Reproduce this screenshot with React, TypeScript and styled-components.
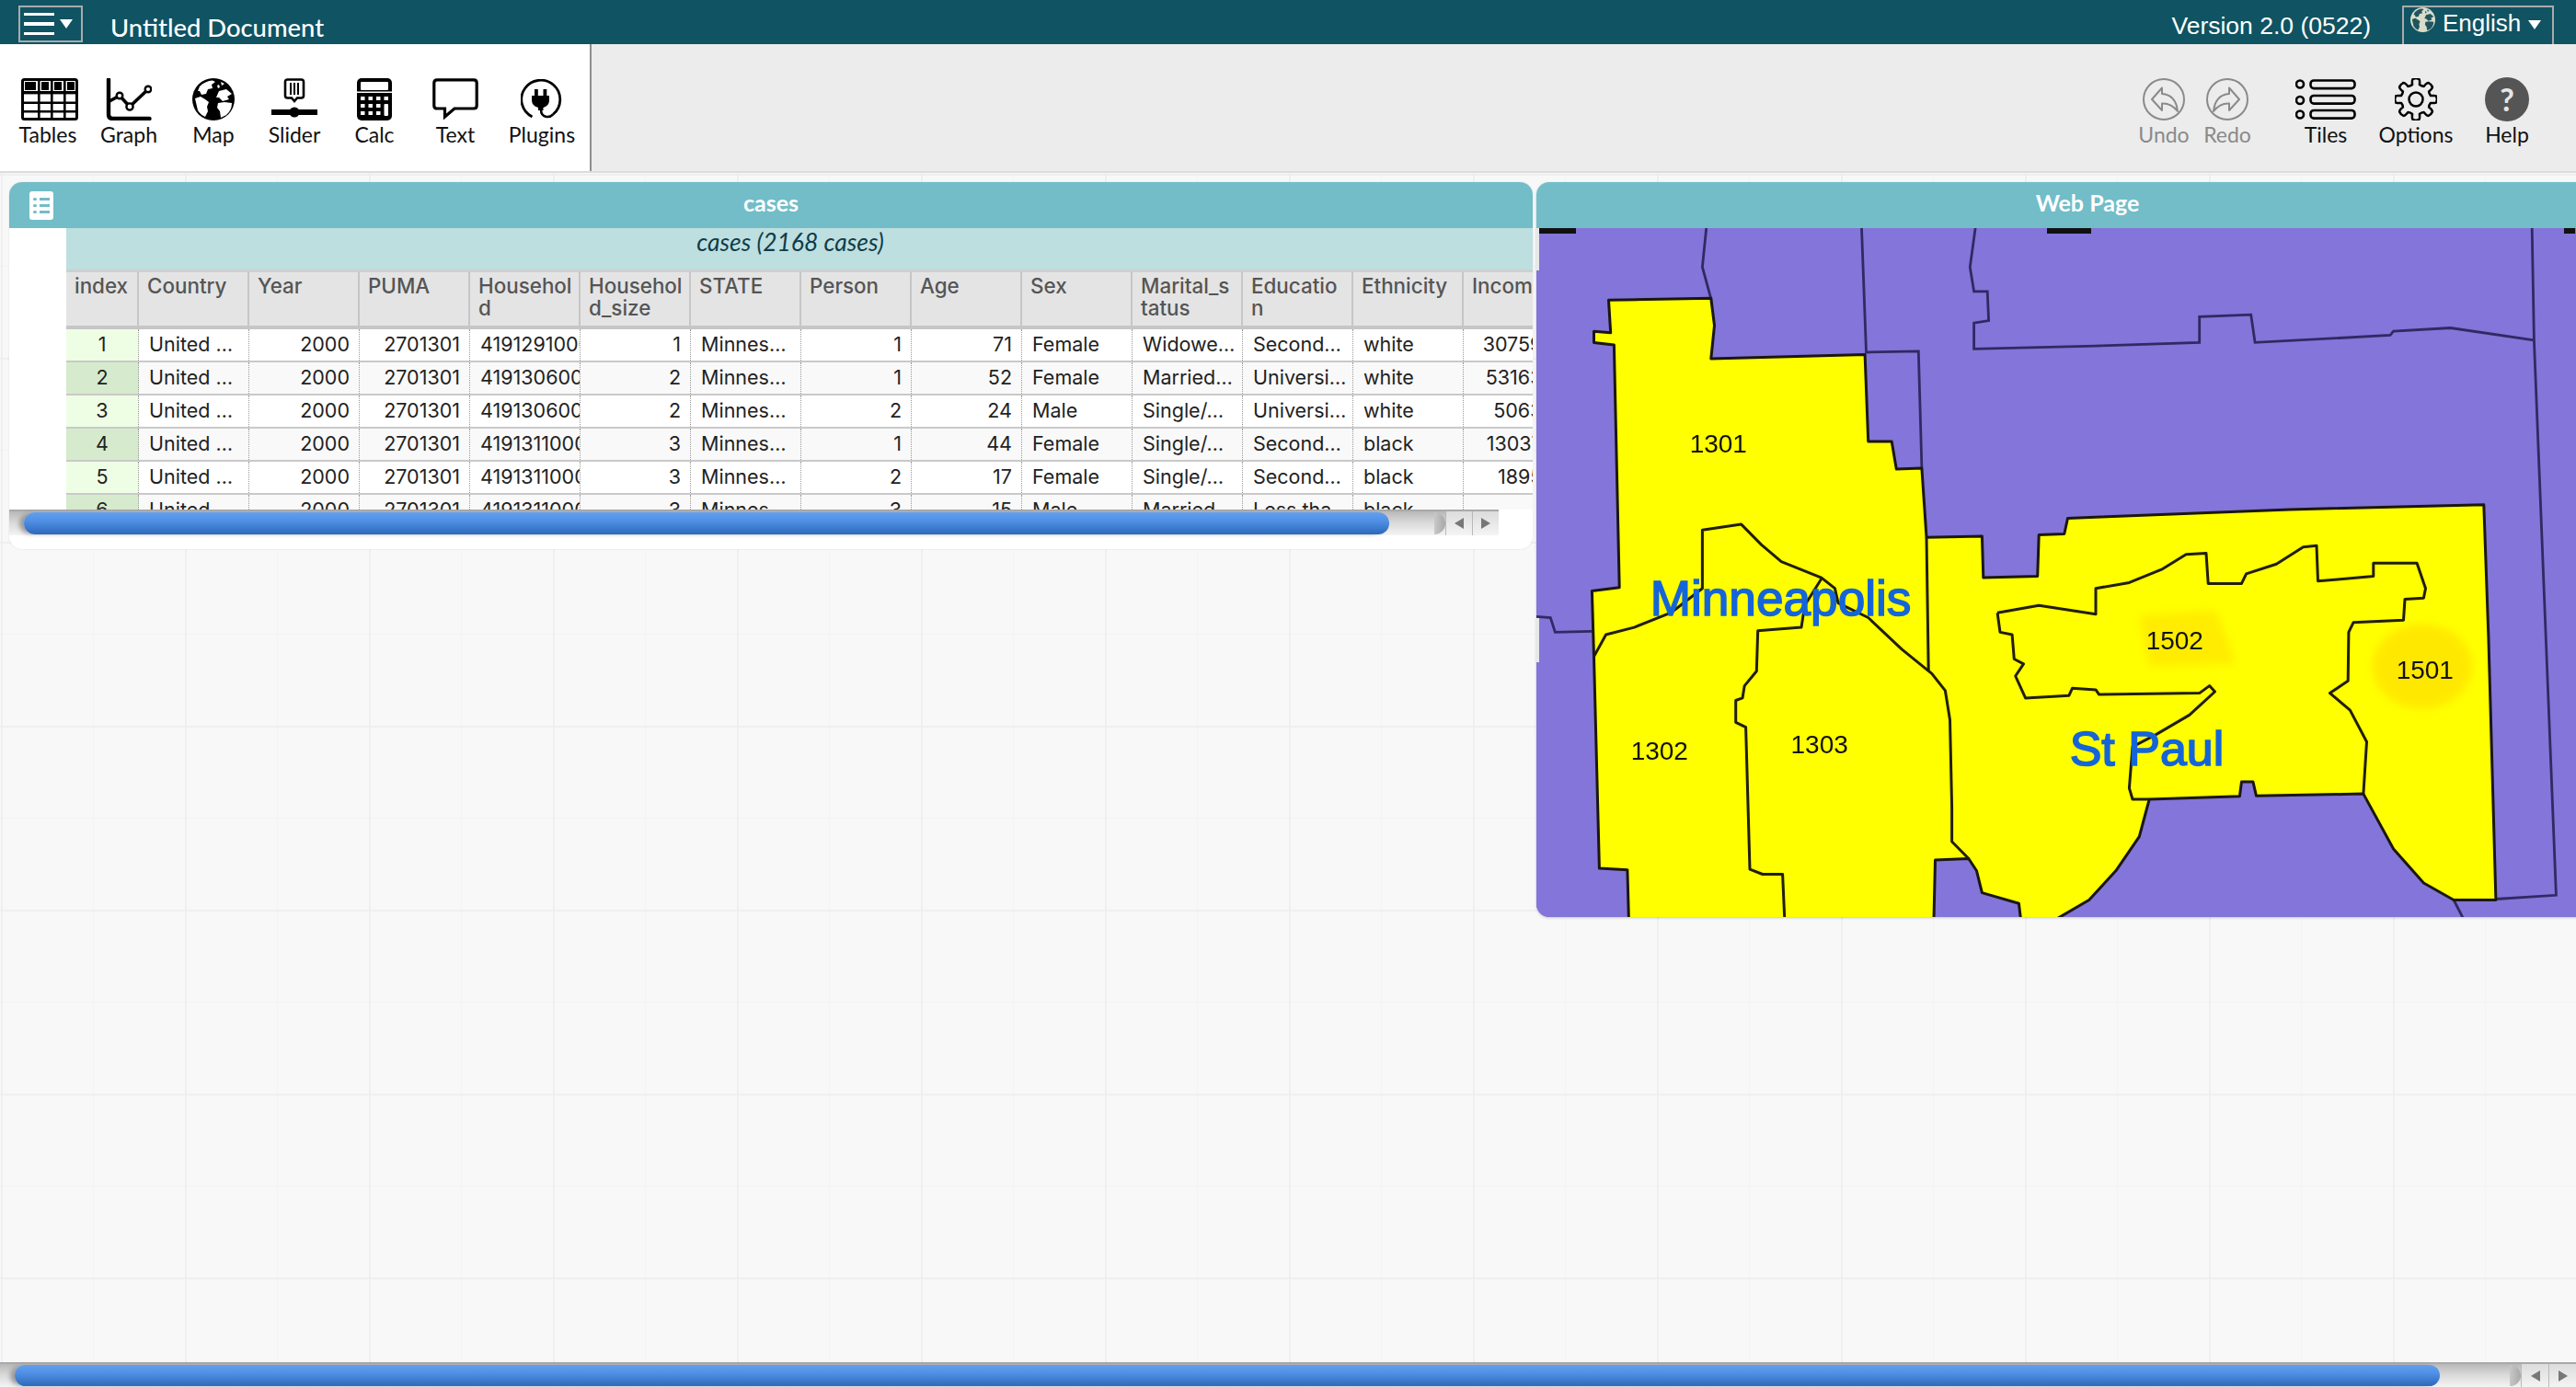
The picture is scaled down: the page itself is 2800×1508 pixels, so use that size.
import React from "react";
import styled, { createGlobalStyle } from "styled-components";

const Global = createGlobalStyle`
  html, body { margin: 0; padding: 0; background: #f8f8f8; overflow: hidden; }
  * { box-sizing: border-box; }
`;

const Page = styled.div`
  width: 2800px; height: 1508px; display: flex; flex-direction: column; overflow: hidden;
  font-family: Lato, "Open Sans", sans-serif;
`;

/* ---------- top bar ---------- */
const TopBar = styled.header`
  height: 48px; flex: none; background: #105362; color: #fff; display: flex; align-items: flex-start;
  padding: 6px 24px 0 20px;
`;
const MenuButton = styled.div`
  width: 70px; height: 40px; border: 2px solid #aaa; display: flex; align-items: center; padding-left: 4px; gap: 6px;
`;
const MenuBars = styled.div`
  width: 33px; display: flex; flex-direction: column; gap: 7px;
  span { display: block; height: 3.5px; background: #fff; }
`;
const Caret = styled.span<{ $size: number }>`
  display: block; width: 0; height: 0;
  border-left: ${p => p.$size}px solid transparent; border-right: ${p => p.$size}px solid transparent;
  border-top: ${p => p.$size * 1.5}px solid #fff;
`;
const DocTitle = styled.div`
  margin-left: 30px; font-size: 27.4px; line-height: 50px; margin-top: -1px; font-weight: 500;
`;
const Version = styled.div`
  margin-left: auto; font-family: "Liberation Sans", Arial, sans-serif; font-size: 26.5px; line-height: 44px;
`;
const LangBox = styled.div`
  margin-left: 34px; width: 165px; height: 42px; border: 2px solid #aaa; border-bottom: 0; display: flex; align-items: flex-start;
  padding: 0 0 0 7px; font-family: "Liberation Sans", Arial, sans-serif; font-size: 26px; line-height: 36px;
  svg { flex: none; }
`;
const LangName = styled.span` margin: -1px 8px 0 8px; `;
const LangCaret = styled.div` margin-top: 14px; `;

/* ---------- toolbar ---------- */
const Toolbar = styled.div`
  height: 140px; flex: none; display: flex; background: #ececec; border-bottom: 2px solid #dcdcdc;
`;
const LeftTools = styled.div`
  width: 643px; background: #fff; border-right: 2px solid #8e8e8e; display: flex; padding-left: 12px;
`;
const RightTools = styled.div`
  margin-left: auto; display: flex; padding-right: 24px;
`;
const ToolButton = styled.div<{ $w: number; $muted?: boolean; $after?: number }>`
  width: ${p => p.$w}px; margin-right: ${p => p.$after ?? 0}px; display: flex; flex-direction: column; align-items: center; padding-top: 35px;
  color: ${p => (p.$muted ? "#8a8a8a" : "#111")};
`;
const ToolIcon = styled.div<{ $dx?: number }>`
  height: 49px; display: flex; align-items: center; justify-content: center; padding-left: ${p => p.$dx ?? 0}px;
`;
const ToolLabel = styled.div`
  font-size: 23px; line-height: 28px; white-space: nowrap;
`;
const HelpDisc = styled.div`
  width: 48px; height: 48px; border-radius: 50%; background: #555; color: #e6e6e6; font-size: 34px; font-weight: 700;
  display: flex; align-items: center; justify-content: center;
`;

/* ---------- canvas ---------- */
const Canvas = styled.main`
  flex: 1; min-height: 0; overflow: hidden; display: flex; align-items: flex-start; gap: 4px; padding: 10px 0 0 10px;
  background-color: #f8f8f8;
  background-image:
    linear-gradient(to right, #efefef 2px, transparent 2px),
    linear-gradient(to bottom, #efefef 2px, transparent 2px),
    linear-gradient(to right, #f3f3f3 1px, transparent 1px),
    linear-gradient(to bottom, #f3f3f3 1px, transparent 1px);
  background-size: 200px 200px, 200px 200px, 100px 100px, 100px 100px;
  background-position: 1px 0, 0 1px, 1px 0, 0 1px;
`;
const CasePanel = styled.section`
  width: 1656px; height: 399px; flex: none; background: #fff; border-radius: 14px; overflow: hidden;
  box-shadow: 0 0 2px rgba(0,0,0,.12);
`;
const PanelTitle = styled.div`
  height: 50px; background: #72bdc8; color: #fff; font-size: 25px; font-weight: 700; display: flex; align-items: center; justify-content: center;
  position: relative; padding-bottom: 6px;
`;
const PanelBadge = styled.div`
  position: absolute; left: 22px; top: 10px; width: 26px; height: 31px; background: #fff; border-radius: 3px;
  display: flex; flex-direction: column; justify-content: center; gap: 4px; padding: 0 4px;
`;
const BadgeRow = styled.div`
  display: flex; align-items: center; gap: 3px; height: 3px;
  &::before { content: ""; width: 3.5px; height: 3.5px; border-radius: 50%; background: #72bdc8; }
  &::after { content: ""; width: 11px; height: 3px; background: #72bdc8; }
`;
const SubTitle = styled.div`
  margin-left: 62px; height: 45px; background: #bddfe0; color: #103c48; font-size: 26.4px; font-style: italic; text-align: center;
  line-height: 31px; padding-right: 20px;
`;
const GridClip = styled.div`
  margin-left: 62px; height: 261px; overflow: hidden; font-family: Inter, "Open Sans", sans-serif; font-size: 21.5px;
`;
const HeaderRow = styled.div`
  display: flex; width: max-content; height: 65px; background: #e4e4e4; border-top: 3px solid #cfcfcf; border-bottom: 4px solid #c6c6c6;
`;
const HeaderCell = styled.div<{ $w: number; $narrow: boolean }>`
  width: ${p => p.$w}px; flex: none; border-right: 2px solid #c6c6c6; color: #555; font-weight: 500; font-size: 22.4px;
  padding: 3px ${p => (p.$narrow ? 8 : 3)}px 0 9px; line-height: 24px;
  word-break: break-all; overflow: hidden;
`;
const DataRow = styled.div<{ $even: boolean }>`
  display: flex; width: max-content; height: 36px; border-bottom: 2px solid #c9c9c9; background: ${p => (p.$even ? "#f9f9f9" : "#fff")};
`;
const DataCell = styled.div<{ $w: number; $right?: boolean }>`
  width: ${p => p.$w}px; flex: none; border-right: 1px dotted #9a9a9a; color: #222; padding: 0 10px 0 11px; line-height: 33px; white-space: nowrap; overflow: hidden;
  display: flex; justify-content: ${p => (p.$right ? "flex-end" : "flex-start")};
`;
const IndexCell = styled.div<{ $even: boolean }>`
  width: 79px; flex: none; border-right: 1px dotted #9a9a9a; color: #222; line-height: 33px; text-align: center;
  background: ${p => (p.$even ? "#d6ebcd" : "#eefee4")};
`;

/* ---------- scrollbars ---------- */
const ScrollBar = styled.div<{ $w: number; $h: number }>`
  width: ${p => p.$w}px; height: ${p => p.$h}px; flex: none; display: flex; border-top: 2px solid #a9a9a9;
  background: linear-gradient(to bottom, #b8b8b8, #d8d8d8 45%, #f4f4f4);
`;
const ScrollTrack = styled.div<{ $pad: number }>`
  flex: 1; display: flex; padding: 1px 0 1px ${p => p.$pad}px;
`;
const ScrollThumb = styled.div<{ $w: number }>`
  width: ${p => p.$w}px; border-radius: 13px; background: linear-gradient(to bottom, #639fef, #4f8fe4 40%, #2d69ba);
  box-shadow: -6px 0 5px -1px #9a9a9a;
`;
const TrackCap = styled.div`
  margin-left: auto; width: 12px; border-radius: 0 12px 12px 0 / 0 50% 50% 0; background: linear-gradient(to right, #c8c8c8, #a8a8a8);
`;
const ArrowCell = styled.div<{ $w: number }>`
  width: ${p => p.$w}px; flex: none; display: flex; align-items: center; justify-content: center;
  border-left: 1px solid #b9b9b9;
  background: linear-gradient(to bottom, #dcdcdc, #f4f4f4);
`;
const Arrow = styled.span<{ $dir: "l" | "r" }>`
  width: 0; height: 0; border-top: 6px solid transparent; border-bottom: 6px solid transparent;
  ${p => (p.$dir === "l" ? "border-right: 10px solid #777;" : "border-left: 10px solid #777;")}
`;

/* ---------- web page tile ---------- */
const WebPanel = styled.section`
  width: 1198px; height: 799px; flex: none; border-radius: 14px; overflow: hidden; box-shadow: 0 1px 3px rgba(0,0,0,.2);
`;
const MapFrame = styled.div`
  height: 749px; background: #8375d9;
  svg { display: block; filter: blur(0.5px); }
`;

/* ---------- icons ---------- */
const TablesIcon = () => (
  <svg width="62" height="46" viewBox="0 0 62 46">
    <rect x="1.5" y="1.5" width="59" height="43" rx="2" fill="#fff" stroke="#000" strokeWidth="3" />
    <rect x="0" y="14" width="62" height="3.4" fill="#000" />
    <rect x="0" y="25.5" width="62" height="2.5" fill="#000" />
    <rect x="0" y="35" width="62" height="2.5" fill="#000" />
    {[18, 32, 46].map(x => <rect key={x} x={x} y="0" width="2.6" height="46" fill="#000" />)}
    <rect x="4" y="4" width="12" height="9" fill="#000" />
    <rect x="22" y="4" width="8" height="9" fill="#000" />
    <rect x="36" y="4" width="8" height="9" fill="#000" />
    <rect x="50" y="4" width="8" height="9" fill="#000" />
  </svg>
);
const GraphIcon = () => (
  <svg width="50" height="46" viewBox="0 0 50 46" fill="none" stroke="#000">
    <path d="M3 1.5V39.5Q3 44 7.5 44H47.5" strokeWidth="4.4" strokeLinecap="round" />
    <path d="M4 25L15 19L26 31L46 12" strokeWidth="3.6" />
    <circle cx="15" cy="19" r="3.3" fill="#fff" strokeWidth="2.4" />
    <circle cx="26" cy="31" r="3.6" fill="#fff" strokeWidth="2.4" />
    <circle cx="46" cy="12" r="3.3" fill="#fff" strokeWidth="2.4" />
  </svg>
);
const GlobeIcon: React.FC<{ size: number; sea: string; land: string }> = ({ size, sea, land }) => (
  <svg width={size} height={size} viewBox="0 0 46 46">
    <circle cx="23" cy="23" r="23" fill={land} />
    <path fill={sea} d="M8 9Q14 3 22 2.5L25 4L21 7L22 11L17 12L15 17L10 18L8 14L6 14Z" />
    <path fill={sea} d="M31 4L35 6L32 8ZM27 8L29 7L30 10L28 11Z" />
    <path fill={sea} d="M29 14L37 12L43 17L38 20L40 23L33 25L29 21L26 21Z" />
    <path fill={sea} d="M3 22L9 20L14 23L18 26L16 31L17 36L14 42Q9 40 6 35Z" />
    <path fill={sea} d="M28 27L35 26L43 27Q43 35 37 40L31 43L30 36L27 32Z" />
  </svg>
);
const SliderIcon = () => (
  <svg width="50" height="46" viewBox="0 0 50 46">
    <path d="M17.5 1.5H32.5Q35 1.5 35 4V19Q35 21.5 32.5 21.5H28L25 25L22 21.5H17.5Q15 21.5 15 19V4Q15 1.5 17.5 1.5Z" fill="#fff" stroke="#000" strokeWidth="2.6" />
    <path d="M21 5V18M25 5V18M29 5V18" stroke="#000" strokeWidth="2" />
    <rect x="0" y="34" width="22" height="6" fill="#000" />
    <rect x="28" y="34" width="22" height="6" fill="#000" />
    <circle cx="25" cy="37" r="5.6" fill="#000" />
  </svg>
);
const CalcIcon = () => (
  <svg width="38" height="46" viewBox="0 0 38 46">
    <rect x="0" y="0" width="38" height="46" rx="5" fill="#000" />
    <rect x="4" y="4" width="30" height="9" rx="1" fill="#fff" />
    <rect x="0" y="14.5" width="38" height="1.5" fill="#fff" />
    {[20, 28, 36].map(y => [4, 12.5, 21, 29.5].map(x =>
      y === 36 && x === 29.5 ? null : (x === 29.5 && y === 28 ? <rect key={x + "-" + y} x={x} y={y} width="4.5" height="13" rx="1" fill="#fff" /> :
      <rect key={x + "-" + y} x={x} y={y} width="4.5" height="4" fill="#fff" />)
    ))}
  </svg>
);
const TextIcon = () => (
  <svg width="50" height="46" viewBox="0 0 50 46" fill="none">
    <path d="M5 1.8H45Q48.2 1.8 48.2 5V30Q48.2 33 45 33H24L13.5 42V33H5Q1.8 33 1.8 30V5Q1.8 1.8 5 1.8Z" stroke="#000" strokeWidth="3.2" />
  </svg>
);
const PluginIcon = () => (
  <svg width="46" height="44" viewBox="0 0 46 44">
    <path d="M12.5 41A21 21 0 1 1 35 38.5" fill="none" stroke="#000" strokeWidth="2.8" />
    <rect x="15" y="11" width="3.8" height="9" fill="#000" />
    <rect x="24.5" y="11" width="3.8" height="9" fill="#000" />
    <path d="M12 18H31V23Q31 29 24.5 31V34H19V31Q12 29 12 23Z" fill="#000" />
    <path d="M22 33Q22 40 28 41Q32 41.5 35 38.5" fill="none" stroke="#000" strokeWidth="2.6" />
  </svg>
);
const UndoIcon: React.FC<{ flip?: boolean }> = ({ flip }) => (
  <svg width="46" height="46" viewBox="0 0 46 46" fill="none" stroke="#8a8a8a" strokeWidth="2">
    <circle cx="23" cy="23" r="22" />
    <g transform={flip ? "translate(46 0) scale(-1 1)" : undefined}>
      <path d="M10 23L21 10.5V17Q36 18 38 36Q31 27 21 27.5V35Z" strokeLinejoin="round" />
    </g>
  </svg>
);
const TilesIcon = () => (
  <svg width="66" height="44" viewBox="0 0 66 44" fill="none" stroke="#000" strokeWidth="2.6">
    {[5.5, 23, 38.5].map(y => <circle key={y} cx="5" cy={y} r="4" />)}
    {[1.5, 18, 34].map(y => <rect key={y} x="16.5" y={y} width="48" height="8.6" rx="3.5" />)}
  </svg>
);
const gearPath = (() => {
  const n = 8, cx = 23, cy = 23, R = 22.5, r = 16.5;
  const out: string[] = [];
  for (let i = 0; i < n; i++) {
    const a = (i / n) * Math.PI * 2 - Math.PI / 2;
    const s = (Math.PI * 2) / n;
    const at = (rad: number, ang: number) => `${(cx + rad * Math.cos(ang)).toFixed(1)} ${(cy + rad * Math.sin(ang)).toFixed(1)}`;
    out.push(`${i === 0 ? "M" : "L"}${at(r, a - s * 0.3)}`, `Q${at(R + 1, a - s * 0.26)} ${at(R, a - s * 0.1)}`, `Q${at(R + 1, a)} ${at(R, a + s * 0.1)}`, `Q${at(R + 1, a + s * 0.26)} ${at(r, a + s * 0.3)}`, `Q${at(r - 1, a + s * 0.5)} ${at(r, a + s * 0.7)}`);
  }
  return out.join(" ") + "Z";
})();
const GearIcon = () => (
  <svg width="46" height="46" viewBox="0 0 46 46" fill="none" stroke="#000" strokeWidth="2.5">
    <path d={gearPath} strokeLinejoin="round" />
    <circle cx="23" cy="23" r="7.5" />
  </svg>
);

/* ---------- map (coordinates measured on the reference crop) ---------- */
const X = (x: number) => (x - 14) / 1.375;
const Y = (y: number) => (y - 110) / 1.889;
const pts = (a: number[]) => {
  const o: string[] = [];
  for (let i = 0; i < a.length; i += 2) o.push(`${X(a[i]).toFixed(1)},${Y(a[i + 1]).toFixed(1)}`);
  return o.join(" ");
};
const YELLOW = [122,258,275,254,280,310,275,378,505,370,510,548,545,548,552,605,590,603,597,745,680,743,682,828,763,825,765,740,803,738,808,706,1140,688,1430,678,1437,950,1448,1490,1385,1490,1340,1455,1295,1385,1250,1272,1090,1276,1085,1247,1068,1247,1065,1277,930,1283,915,1360,880,1430,840,1490,790,1530,738,1530,735,1497,680,1475,672,1430,660,1405,610,1408,608,1530,152,1530,150,1428,108,1425,100,990,97,855,138,848,130,350,100,345,100,322,125,325];
const LINES = [
  [100,990,118,945,160,930,215,900,262,850,262,730,320,718,350,760,380,795,440,828,460,850,465,880,510,910,560,975,605,1025,625,1060,632,1120,635,1300,635,1370,660,1405],
  [440,830,415,885,410,930,345,937,343,1020,325,1050,322,1075,312,1080,312,1125,327,1135,333,1427,352,1437,382,1437,385,1530],
  [597,745,600,1020],
  [703,900,765,885,850,903,850,850,900,838,950,810,985,780,1015,778,1018,840,1068,840,1075,820,1120,800,1160,765,1180,762,1182,835,1265,825,1265,798,1330,798,1343,850,1340,870,1312,872,1310,915,1235,920,1228,940,1227,1040,1200,1065,1230,1100,1255,1165,1250,1272],
  [703,900,707,940,725,945,728,995,742,1005,730,1030,745,1075,810,1070,815,1055,850,1058,855,1068,1005,1065,1020,1050,1028,1062,990,1110,940,1150,905,1175,900,1260,905,1283,930,1283],
];
const BORDERS = [
  [268,110,262,190,275,255],
  [500,110,507,365,585,363,590,603],
  [670,110,662,190,668,240,688,240,690,300,668,305,668,358,850,352,1005,345,1005,292,1082,288,1088,345,1290,330,1295,322,1380,315,1505,340],
  [1502,110,1505,340,1538,1480,1448,1488],
  [1385,1490,1400,1530],
  [14,908,35,910,42,940,97,938],
];
const LABELS: [string, number, number][] = [["1301",286,552],["1302",198,1183],["1303",437,1170],["1502",968,957],["1501",1342,1017]];

const MapDrawing = () => (
  <svg width="1198" height="749" viewBox="0 0 1198 749">
    <defs>
      <filter id="soft" x="-30%" y="-30%" width="160%" height="160%"><feGaussianBlur stdDeviation="5" /></filter>
    </defs>
    <rect width="1198" height="749" fill="#8375d9" />
    {BORDERS.map((b, i) => <polyline key={i} points={pts(b)} fill="none" stroke="#2f2a63" strokeWidth="2.8" />)}
    <polygon points={pts(YELLOW)} fill="#ffff00" stroke="#1a1710" strokeWidth="3" strokeLinejoin="round" />
    <g filter="url(#soft)">
      <polygon points={pts([915,905,1030,895,1060,1005,930,1010])} fill="#ffec00" />
      <ellipse cx={X(1338)} cy={Y(1010)} rx="54" ry="46" fill="#ffe800" />
    </g>
    {LINES.map((l, i) => <polyline key={i} points={pts(l)} fill="none" stroke="#211e08" strokeWidth="3" strokeLinejoin="round" />)}
    <g fontFamily="'Liberation Sans', Arial, sans-serif" fontSize="28" fill="#111" textAnchor="middle">
      {LABELS.map(([t, x, y]) => <text key={t} x={X(x)} y={Y(y) + 10}>{t}</text>)}
    </g>
    <g fontFamily="'Liberation Sans', Arial, sans-serif" fill="#1565d8" stroke="#1565d8" strokeWidth="1.6">
      <text x={X(184)} y={Y(905)} fontSize="53.2">Minneapolis</text>
      <text x={X(811)} y={Y(1213)} fontSize="52">St Paul</text>
    </g>
    <rect x="0" y="0" width="43" height="6" fill="#111" />
    <rect x="555" y="0" width="48" height="6" fill="#111" />
    <rect x="1117" y="0" width="12" height="6" fill="#111" />
    <rect x="0" y="0" width="3" height="46" fill="#e8e8e8" />
    <rect x="0" y="424" width="3" height="48" fill="#e8e8e8" />
  </svg>
);

/* ---------- data ---------- */
const HEADERS: [string, number][] = [
  ["index", 79], ["Country", 120], ["Year", 120], ["PUMA", 120], ["Household", 120], ["Household_size", 120], ["STATE", 120],
  ["Person", 120], ["Age", 120], ["Sex", 120], ["Marital_status", 120], ["Education", 120], ["Ethnicity", 120], ["Income", 120],
];
const ROWS: string[][] = [
  ["2000","2701301","419129100000","1","Minnes…","1","71","Female","Widowe…","Second…","white","307590"],
  ["2000","2701301","419130600000","2","Minnes…","1","52","Female","Married…","Universi…","white","531630"],
  ["2000","2701301","419130600000","2","Minnes…","2","24","Male","Single/…","Universi…","white","50630"],
  ["2000","2701301","419131100000","3","Minnes…","1","44","Female","Single/…","Second…","black","130370"],
  ["2000","2701301","419131100000","3","Minnes…","2","17","Female","Single/…","Second…","black","18950"],
  ["2000","2701301","419131100000","3","Minnes…","3","15","Male","Married","Less tha","black",""],
];
const RIGHT = [true, true, false, true, false, true, true, false, false, false, false, true];

const App: React.FC = () => (
  <Page>
    <Global />
    <TopBar>
      <MenuButton>
        <MenuBars><span /><span /><span /></MenuBars>
        <Caret $size={7} />
      </MenuButton>
      <DocTitle>Untitled Document</DocTitle>
      <Version>Version 2.0 (0522)</Version>
      <LangBox>
        <GlobeIcon size={27} sea="#1f5561" land="#d9dcc9" />
        <LangName>English</LangName>
        <LangCaret><Caret $size={7} /></LangCaret>
      </LangBox>
    </TopBar>

    <Toolbar>
      <LeftTools>
        <ToolButton $w={80}><ToolIcon $dx={3}><TablesIcon /></ToolIcon><ToolLabel>Tables</ToolLabel></ToolButton>
        <ToolButton $w={96}><ToolIcon><GraphIcon /></ToolIcon><ToolLabel>Graph</ToolLabel></ToolButton>
        <ToolButton $w={88}><ToolIcon><GlobeIcon size={46} sea="#fff" land="#000" /></ToolIcon><ToolLabel>Map</ToolLabel></ToolButton>
        <ToolButton $w={88}><ToolIcon><SliderIcon /></ToolIcon><ToolLabel>Slider</ToolLabel></ToolButton>
        <ToolButton $w={86}><ToolIcon><CalcIcon /></ToolIcon><ToolLabel>Calc</ToolLabel></ToolButton>
        <ToolButton $w={90}><ToolIcon><TextIcon /></ToolIcon><ToolLabel>Text</ToolLabel></ToolButton>
        <ToolButton $w={98}><ToolIcon><PluginIcon /></ToolIcon><ToolLabel>Plugins</ToolLabel></ToolButton>
      </LeftTools>
      <RightTools>
        <ToolButton $w={68} $muted><ToolIcon><UndoIcon /></ToolIcon><ToolLabel>Undo</ToolLabel></ToolButton>
        <ToolButton $w={70} $muted $after={22}><ToolIcon><UndoIcon flip /></ToolIcon><ToolLabel>Redo</ToolLabel></ToolButton>
        <ToolButton $w={100}><ToolIcon><TilesIcon /></ToolIcon><ToolLabel>Tiles</ToolLabel></ToolButton>
        <ToolButton $w={96}><ToolIcon><GearIcon /></ToolIcon><ToolLabel>Options</ToolLabel></ToolButton>
        <ToolButton $w={102}><ToolIcon><HelpDisc>?</HelpDisc></ToolIcon><ToolLabel>Help</ToolLabel></ToolButton>
      </RightTools>
    </Toolbar>

    <Canvas>
      <CasePanel>
        <PanelTitle>
          <PanelBadge><BadgeRow /><BadgeRow /><BadgeRow /></PanelBadge>
          cases
        </PanelTitle>
        <SubTitle>cases (2168 cases)</SubTitle>
        <GridClip>
          <HeaderRow>
            {HEADERS.map(([h, w]) => <HeaderCell key={h} $w={w} $narrow={h === "Marital_status"}>{h}</HeaderCell>)}
          </HeaderRow>
          {ROWS.map((r, i) => (
            <DataRow key={i} $even={i % 2 === 1}>
              <IndexCell $even={i % 2 === 1}>{i + 1}</IndexCell>
              <DataCell $w={120}>United …</DataCell>
              {r.map((v, j) => <DataCell key={j} $w={j === 11 ? 110 : 120} $right={RIGHT[j]}>{v}</DataCell>)}
            </DataRow>
          ))}
        </GridClip>
        <ScrollBar $w={1619} $h={28}>
          <ScrollTrack $pad={16}>
            <ScrollThumb $w={1484} />
            <TrackCap />
          </ScrollTrack>
          <ArrowCell $w={29}><Arrow $dir="l" /></ArrowCell>
          <ArrowCell $w={29}><Arrow $dir="r" /></ArrowCell>
        </ScrollBar>
      </CasePanel>
      <WebPanel>
        <PanelTitle>Web Page</PanelTitle>
        <MapFrame><MapDrawing /></MapFrame>
      </WebPanel>
    </Canvas>

    <ScrollBar $w={2800} $h={27}>
      <ScrollTrack $pad={16}>
        <ScrollThumb $w={2636} />
        <TrackCap />
      </ScrollTrack>
      <ArrowCell $w={30}><Arrow $dir="l" /></ArrowCell>
      <ArrowCell $w={30}><Arrow $dir="r" /></ArrowCell>
    </ScrollBar>
  </Page>
);

export default App;
